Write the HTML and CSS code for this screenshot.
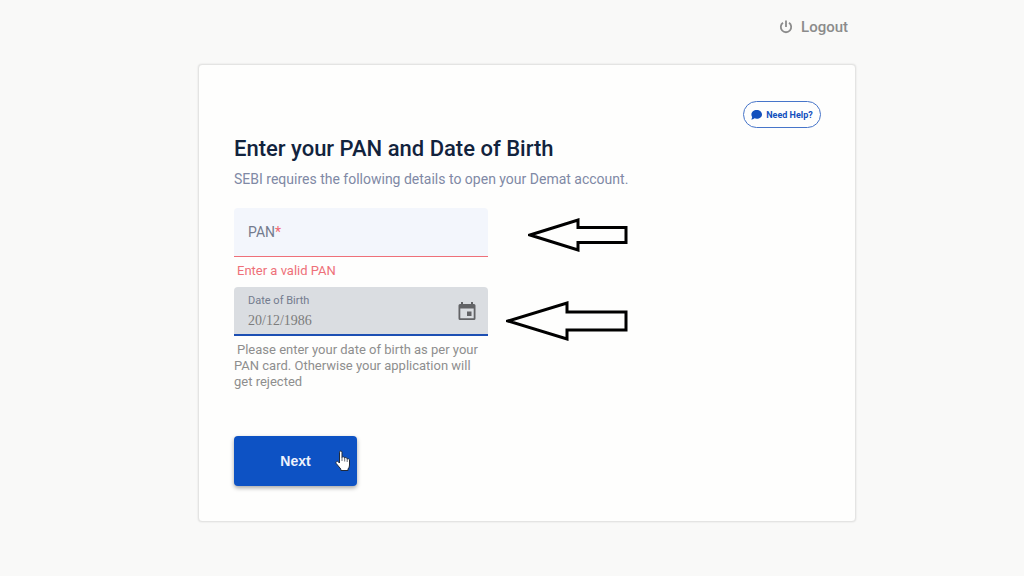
FILE: index.html
```html
<!DOCTYPE html>
<html lang="en">
<head>
    <meta charset="UTF-8">
    <meta name="viewport" content="width=device-width, initial-scale=1">
    <title>PAN and Date of Birth</title>
    <link rel="stylesheet" href="styles.css">
</head>
<body>
<header class="header">
    <button type="button" class="logout">
        <svg width="14" height="14" viewBox="0 0 14 14" fill="none" stroke="currentColor" stroke-width="1.8" aria-hidden="true">
            <path d="M4 2.8A5.2 5.2 0 1 0 10 2.8M7 .5V7"/>
        </svg>
        Logout
    </button>
</header>
<main class="card">
    <button type="button" class="help">
        <svg width="11" height="10" viewBox="0 0 11 10" fill="currentColor" aria-hidden="true">
            <path d="M5.7 0C8.700 0 11 1.900 11 4.400S8.700 8.700 5.700 8.700C4.900 8.700 4.100 8.600 3.500 8.300C2.600 9.100 1.500 9.500 .2 9.600C.8 8.900 1.200 8.100 1.200 7.100C.7 6.300 .4 5.400 .4 4.400C.4 1.900 2.700 0 5.700 0Z"/>
        </svg>
        Need Help?
    </button>
    <h1 class="title">Enter your PAN and Date of Birth</h1>
    <p class="subtitle">SEBI requires the following details to open your Demat account.</p>
    <form class="form">
        <div class="field field-pan">
            <input type="text" id="pan" class="input">
            <label for="pan" class="label">PAN<span class="required">*</span></label>
            <svg class="arrow" width="100" height="34" viewBox="0 0 100 34" aria-hidden="true">
                <path d="M2 17L50 2V9.500H98V24.500H50V32Z"/>
            </svg>
        </div>
        <p class="error">Enter a valid PAN</p>
        <div class="field field-dob">
            <label for="dob" class="label">Date of Birth</label>
            <input type="text" id="dob" class="input" value="20/12/1986">
            <button type="button" class="calendar" aria-label="Choose date">
                <svg width="18" height="20" viewBox="0 0 18 20" aria-hidden="true">
                    <path fill="currentColor" fill-rule="evenodd" d="M3 1H5V3H13V1H15V3H16Q17.500 3 17.500 4.500V17.500Q17.500 19 16 19H2Q.5 19 .5 17.500V4.500Q.5 3 2 3H3ZM2.300 7.500V17.200H15.700V7.500ZM9 10.500H13.500V15H9Z"/>
                </svg>
            </button>
            <svg class="arrow" width="122" height="40" viewBox="0 0 122 40" aria-hidden="true">
                <path d="M2 20L61 2V11H120V29H61V38Z"/>
            </svg>
        </div>
        <p class="hint">Please enter your date of birth as per your PAN card. Otherwise your application will get rejected</p>
        <button type="button" class="next">
            Next
            <svg class="pointer" width="16" height="22" viewBox="0 0 16 22" aria-hidden="true">
                <path fill="#fff" stroke="#222b3a" stroke-linejoin="round" d="M4.500 12V2.200Q4.500 1 5.700 1T7 2.200V7.500Q7.500 6.500 8.500 6.800T9.700 8Q10.200 7.200 11.100 7.500T12.200 8.900Q13.500 8.200 14.500 9.700V15Q14.500 17.500 13 19V20.500H5.800V19L1.200 13.500Q.5 12.300 1.500 11.600T3.500 12L4.500 13Z"/>
                <path fill="none" stroke="#222b3a" stroke-width=".7" d="M7 7.500V11M9.700 8V11.500M12.200 9V12"/>
            </svg>
        </button>
    </form>
</main>
</body>
</html>
```
FILE: styles.css
```css
* {
    box-sizing: border-box;
}
body {
    margin: 0;
    padding: 0 168px 54px 198px;
    background-color: #f9f9f8;
    font-family: Roboto, "Noto Sans", sans-serif;
}
h1, p {
    margin: 0;
}
button {
    padding: 0;
    border: none;
    background: none;
    font-family: inherit;
    cursor: pointer;
}

/* top bar */
.header {
    display: flex;
    justify-content: flex-end;
    height: 64px;
    padding: 16px 8px 0 0;
}
.logout {
    display: flex;
    align-items: center;
    gap: 8px;
    height: 22px;
    color: #8b8b8b;
    font-size: 15px;
    font-weight: 500;
}

/* card */
.card {
    display: flex;
    flex-direction: column;
    padding: 36px 34px 35px 35px;
    border: 1px solid #e4e4e3;
    border-radius: 4px;
    background-color: #fefefd;
    box-shadow: 0 0 2px rgba(0, 0, 0, .12);
}
.help {
    display: flex;
    align-self: flex-end;
    align-items: center;
    justify-content: center;
    gap: 4px;
    width: 78px;
    height: 27px;
    border: 1px solid #4775c9;
    border-radius: 14px;
    color: #1350bd;
    font-size: 9px;
    font-weight: 700;
    white-space: nowrap;
}
.title {
    margin-top: 6px;
    color: #12233d;
    font-size: 22px;
    font-weight: 500;
    line-height: 30px;
}
.subtitle {
    margin-top: 5px;
    color: #8089a5;
    font-size: 14px;
    line-height: 20px;
}

/* form */
.form {
    width: 254px;
    max-width: 100%;
    margin-top: 19px;
}
.field {
    position: relative;
    height: 49px;
    border-radius: 4px 4px 0 0;
}
.input {
    display: block;
    width: 100%;
    border: none;
    outline: none;
    background: none;
}
.field-pan {
    border-bottom: 1px solid #ee7079;
    background-color: #f3f6fc;
}
.field-pan .input {
    height: 48px;
    padding: 0 14px;
}
.field-pan .label {
    position: absolute;
    top: 14px;
    left: 14px;
    color: #737b8e;
    font-size: 14px;
    line-height: 20px;
}
.required {
    color: #f06872;
}
.error {
    padding: 4px 3px 6px;
    color: #ee7079;
    font-size: 13px;
    line-height: 20px;
}
.field-dob {
    padding: 6px 14px 0;
    border-bottom: 2px solid #1c4fb3;
    background-color: #dadde1;
}
.field-dob .label {
    display: block;
    color: #737b8e;
    font-size: 11px;
    line-height: 16px;
}
.field-dob .input {
    height: 24px;
    padding: 0;
    color: #7c7c7c;
    font-family: "Liberation Serif", serif;
    font-size: 14px;
}
.calendar {
    position: absolute;
    top: 14px;
    right: 12px;
    height: 20px;
    color: #626366;
}
.calendar svg {
    display: block;
}
.hint {
    padding: 6px 2px 0 0;
    color: #8e8e8e;
    font-size: 13px;
    line-height: 16px;
    text-indent: 3px;
}
.next {
    position: relative;
    display: block;
    width: 123px;
    height: 50px;
    margin-top: 46px;
    border-radius: 4px;
    background-color: #0d52c4;
    box-shadow: 0 2px 4px rgba(0, 0, 0, .35);
    color: #eef3fc;
    font-family: "Liberation Sans", sans-serif;
    font-size: 14px;
    font-weight: 700;
}

/* arrows and pointer lie over the form */
.arrow {
    position: absolute;
    fill: none;
    stroke: #000;
    stroke-width: 3;
}
.field-pan .arrow {
    top: 10px;
    left: 294px;
}
.field-dob .arrow {
    top: 14px;
    left: 272px;
}
.pointer {
    position: absolute;
    top: 14px;
    right: 6px;
}
```
